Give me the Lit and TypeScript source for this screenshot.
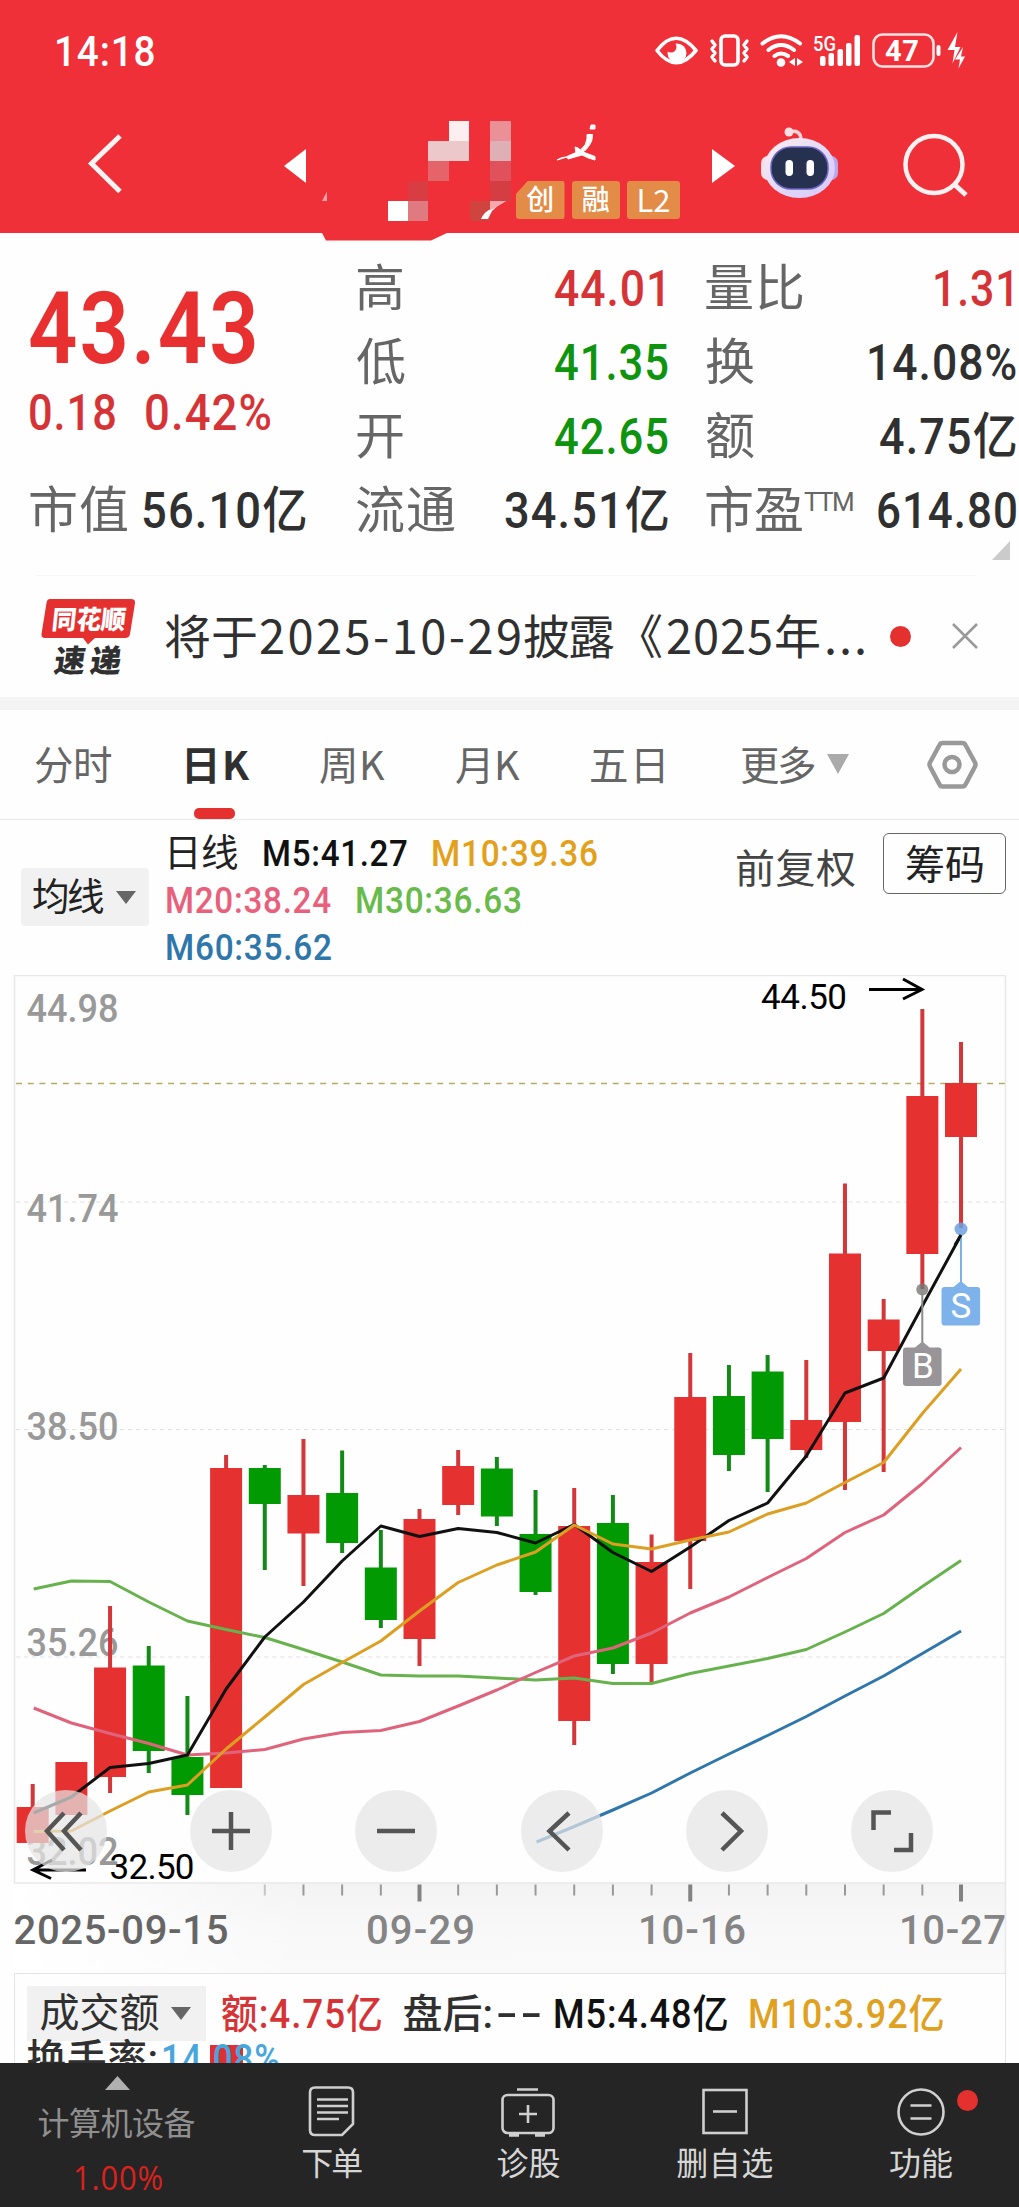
import { LitElement, html, css, svg } from "lit";
import { customElement, property } from "lit/decorators.js";

const NUM = '"Roboto", "Noto Sans CJK SC", sans-serif';
const ruler = document.createElement("canvas").getContext("2d")!;

/** One line of text whose visible glyphs span exactly `w` pixels. */
@customElement("fit-text")
class FitText extends LitElement {
  static styles = css`
    :host { display: block; white-space: nowrap; flex: none; }
    .run { display: block; transform-origin: 0 50%; }
  `;
  @property() text = "";
  @property({ type: Number }) w = 0;

  render() {
    return html`<span class="run">${this.text}</span>`;
  }

  updated() {
    const cs = getComputedStyle(this);
    ruler.font = `${cs.fontWeight} ${cs.fontSize} ${cs.fontFamily}`;
    const m = ruler.measureText(this.text);
    const n = [...this.text].length;
    const ink = m.actualBoundingBoxLeft + m.actualBoundingBoxRight;
    // Digits that would be squeezed together are condensed instead; bare dashes are widened.
    const condensed = /\d/.test(this.text) && this.w < ink;
    const k = /^-+$/.test(this.text) ? 1.6 : condensed ? Math.max(0.84, (this.w / ink) * 0.965) : 1;
    const gap = n > 1 && this.w ? (this.w / k - ink) / (n - 1) : 0;
    const run = this.renderRoot.querySelector(".run") as HTMLElement;
    this.style.letterSpacing = `${gap}px`;
    this.style.marginLeft = `${m.actualBoundingBoxLeft * k}px`;
    const inkRight = (m.actualBoundingBoxRight + (n - 1) * gap) * k;
    this.style.marginRight = `${-(m.width + n * gap - inkRight)}px`;
    run.style.transform = k === 1 ? "none" : `scaleX(${k})`;
  }
}

const t = (text: string, w: number, cls = "") =>
  html`<fit-text class=${cls} .text=${text} .w=${w}></fit-text>`;

@customElement("app-header")
class AppHeader extends LitElement {
  static styles = css`
    :host { display: block; height: 233px; background: #f03038; color: #fff; font-family: ${css([NUM] as any)}; position: relative; }
    svg { display: block; flex: none; overflow: visible; }
    text { font-family: "Roboto", sans-serif; font-weight: 700; fill: #fff; }
    .status { height: 102px; display: flex; align-items: center; justify-content: space-between; padding: 0 54px 0 57px; }
    .time { font-size: 42px; font-weight: 500; line-height: 50px; padding-top: 2px; }
    .nav { height: 131px; display: flex; align-items: flex-start; }
    .back { margin: 31px 0 0 87px; }
    .prev { margin: 47px 0 0 161px; }
    .name { margin: 14px 0 0 14px; }
    .tags { display: flex; gap: 7px; margin: 79px 0 0 -64px; }
    .tag { height: 38px; width: 48.500px; display: flex; align-items: center; justify-content: center; border-radius: 3px; background: #e38c47; font-size: 28px; line-height: 35px; padding-bottom: 3px; box-sizing: border-box; font-weight: 500; font-family: "Noto Sans CJK SC", sans-serif; }
    .tag.cut { clip-path: polygon(24% 0, 100% 0, 100% 100%, 0 100%, 0 34%); }
    .tag.wide { width: 53px; font-size: 31px; font-weight: 400; }
    .next { margin: 47px 0 0 32px; }
    .bot { margin: 24px 0 0 26px; }
    .find { margin: 31px 0 0 63px; }
  `;

  render() {
    return html`
      <div class="status">
        ${t("14:18", 97, "time")}
        <svg width="310" height="36" viewBox="655 33 310 36">
          <g fill="none" stroke="#fff" stroke-width="3.6" stroke-linecap="round" stroke-linejoin="round">
            <path d="M657 50.5Q676 26 696 50.5Q676 75 657 50.5Z" />
            <rect x="721" y="36" width="17" height="29" rx="4" />
            <path d="M712 41l3 4-3 4 3 4-3 4 3 4M747 41l-3 4 3 4-3 4 3 4-3 4" stroke-width="3.4" />
            <path d="M762.500 43.500Q781 29 800 43.500M768.500 50Q781 40 794 50M774.500 56Q781 51 788 56" stroke-width="4" />
          </g>
          <circle cx="677" cy="53" r="9.500" fill="#fff" />
          <circle cx="671" cy="47" r="5.500" fill="#f03038" />
          <circle cx="781" cy="62.500" r="4.300" fill="#fff" />
          <path d="M795 58v8l-6-4zM797 58v8l6-4z" fill="#fff" />
          <text x="813" y="51" font-size="21" textLength="23" lengthAdjust="spacingAndGlyphs" style="font-weight:500">5G</text>
          <g fill="#fff">
            <rect x="820" y="56" width="5.500" height="10" rx="2" />
            <rect x="828.500" y="53" width="5.500" height="13" rx="2" />
            <rect x="837.500" y="49" width="5.500" height="17" rx="2" />
            <rect x="846" y="43" width="5.500" height="23" rx="2" />
            <rect x="854.500" y="35" width="5.500" height="31" rx="2" />
            <rect x="936.500" y="45" width="4" height="11" rx="2" />
            <path d="M957.500 32l-10 18h7l-2 13.500 8-16.500h-5.500zM963 47l-8 12.500h5l-1.500 9 6.500-12h-4z" />
          </g>
          <rect x="873.500" y="34.500" width="60" height="32" rx="9" fill="none" stroke="#fff" stroke-opacity=".85" stroke-width="2.600" />
          <text x="885" y="60.500" font-size="29" textLength="34">47</text>
        </svg>
      </div>
      <div class="nav">
        <svg class="back" width="36" height="62" viewBox="87 133 36 62">
          <path d="M120 136L91.500 163.500 120 191.500" fill="none" stroke="#fff3f3" stroke-width="5" />
        </svg>
        <svg class="prev" width="22" height="34" viewBox="0 0 22 34"><path d="M22 0v34L0 17z" fill="#fff" /></svg>
        <svg class="name" width="260" height="126" viewBox="320 116 260 126">
          <path d="M320 231h130l-3 2-16 7.500H326L322 233z" fill="#f03038" />
          <path d="M322 201l5-9.500v9.500z" fill="#f9a3a6" />
          <path d="M388 201h20v20h-20z" fill="#fff" />
          <path d="M449 121h20v20h-20z" fill="#fdeeef" />
          <path d="M428 141h41v20h-41z" fill="#ecc8ca" />
          <path d="M428 161h21v20h-21z" fill="#e4646a" />
          <path d="M408 181h20v20h-20z" fill="#d83d43" />
          <path d="M408 201h20v20h-20z" fill="#e07a81" />
          <path d="M490 121h21v20h-21z" fill="#ec9098" />
          <path d="M490 141h21v20h-21z" fill="#dfafb6" />
          <path d="M490 161h21v20h-21z" fill="#df525c" />
          <path d="M490 181h21v20h-21z" fill="#d43d41" />
          <path d="M470 201h20v20h-20z" fill="#d0443f" />
          <path d="M481 219q3-7 9-9.500V201h16q-8 4-14 10l-4 8z" fill="#fff" />
          <path d="M490 201h16q-7 3-11 7l-5 2z" fill="#f6a8ac" />
          <path d="M591 125h4v4h-5zM587 134.500h5.500q0 7-3 10.500-3 5-6.500 7l12 4.500v3.500q-8-2-13-5l-14 4-1-2.500 9-4-1-5.500 3 1 2.500 2q6-5 6.500-11zM567 157l-10 3q5-3.500 10-3z" fill="#fff" stroke="#fff" stroke-width="1" />
        </svg>
        <div class="tags">
          <div class="tag cut">创</div>
          <div class="tag">融</div>
          <div class="tag wide">L2</div>
        </div>
        <svg class="next" width="23" height="34" viewBox="0 0 23 34"><path d="M0 0v34L23 17z" fill="#fff" /></svg>
        <svg class="bot" width="78" height="73" viewBox="761 126 78 73">
          <defs>
            <linearGradient id="shell" x1="0" y1="0" x2="1" y2="1">
              <stop offset="0" stop-color="#ffeef0" /><stop offset=".6" stop-color="#dfd6f8" /><stop offset="1" stop-color="#d7c6f6" />
            </linearGradient>
          </defs>
          <path d="M789 132q12-3 12 8" fill="none" stroke="#f7d3dc" stroke-width="3.500" />
          <circle cx="789" cy="132" r="4.500" fill="#fbdfe4" />
          <rect x="761" y="156" width="14" height="24" rx="7" fill="#f6dfe8" />
          <rect x="824" y="156" width="14" height="24" rx="7" fill="#b9a6ee" />
          <ellipse cx="799.500" cy="168" rx="35.500" ry="30" fill="url(#shell)" />
          <rect x="771" y="147" width="57" height="42" rx="20" fill="#26304f" stroke="#6a62c4" stroke-width="1.500" />
          <rect x="785.500" y="160" width="7.500" height="16" rx="3.700" fill="#fff" />
          <rect x="806.500" y="160" width="7.500" height="16" rx="3.700" fill="#fff" />
        </svg>
        <svg class="find" width="66" height="66" viewBox="902 133 66 66">
          <circle cx="934" cy="164.500" r="28.500" fill="none" stroke="#fff1f1" stroke-width="4.500" />
          <path d="M955 185l11 10" stroke="#fff1f1" stroke-width="5" />
        </svg>
      </div>
    `;
  }
}

@customElement("quote-panel")
class QuotePanel extends LitElement {
  static styles = css`
    :host { display: flex; height: 342px; box-sizing: border-box; padding-top: 19px; font-family: ${css([NUM] as any)}; font-size: 50px; font-weight: 500; line-height: 75px; color: #303030; position: relative; }
    .side { width: 327px; padding-left: 30px; }
    .mid { width: 311px; }
    .right { width: 313px; padding-left: 38px; }
    .row { display: flex; justify-content: space-between; height: 74px; }
    .side .row { justify-content: flex-start; gap: 17px; }
    .right .row { padding-right: 3px; }
    .label { color: #666; font-weight: 400; display: flex; }
    .price { margin-top: 8px; height: 134px; line-height: 138px; font-size: 101px; font-weight: 600; color: #e83030; display: flex; }
    .side .change { height: 37px; line-height: 39px; gap: 31px; color: #d63337; margin-bottom: 43px; }
    .up { color: #d63337; }
    .down { color: #0e940e; }
    .tail1 { padding-right: 5px; }
    .ttm { font-size: 26px; font-weight: 400; line-height: 57px; padding-left: 2px; display: flex; }
    .more { position: absolute; left: 992px; top: 308px; display: block; }
  `;

  render() {
    const row = (label: any, value: any) => html`<div class="row"><div class="label">${label}</div>${value}</div>`;
    return html`
      <div class="side">
        <div class="price">${t("43.43", 225)}</div>
        <div class="row change">${t("0.18", 85)}${t("0.42%", 124.5)}</div>
        ${row(t("市值", 97), t("56.10亿", 162))}
      </div>
      <div class="mid">
        ${row(t("高", 47), html`<div class="tail1">${t("44.01", 108, "up")}</div>`)}
        ${row(t("低", 47), t("41.35", 113, "down"))}
        ${row(t("开", 47), t("42.65", 113, "down"))}
        ${row(t("流通", 98), t("34.51亿", 163))}
      </div>
      <div class="right">
        ${row(t("量比", 97), html`<div class="tail1">${t("1.31", 76, "up")}</div>`)}
        ${row(t("换", 47), t("14.08%", 146))}
        ${row(t("额", 47), t("4.75亿", 136))}
        ${row(html`${t("市盈", 96)}<div class="ttm">${t("TTM", 49)}</div>`, t("614.80", 138))}
      </div>
      <svg class="more" width="18" height="19"><path d="M18 0v19H0z" fill="#cbcbcb" /></svg>
    `;
  }
}

@customElement("news-strip")
class NewsStrip extends LitElement {
  static styles = css`
    :host { display: flex; align-items: center; height: 122px; padding: 0 42px 0 41px; box-sizing: border-box; background: linear-gradient(#f6f6f6, #f6f6f6) 35px 0 / 941px 1px no-repeat; font-family: "Noto Sans CJK SC", sans-serif; }
    svg { display: block; flex: none; overflow: visible; }
    .logo { margin-top: 1px; }
    text { font-family: "Noto Sans CJK SC", sans-serif; font-weight: 900; }
    .msg { flex: none; width: 697px; margin: -5px 28px 0 29px; display: flex; align-items: baseline; font-size: 47px; line-height: 60px; color: #303030; }
    .date { margin: 0 4px; display: flex; }
    .yr { margin: 0 5px 0 5px; display: flex; }
    .open { margin-left: 26px; display: flex; }
    .dots { margin-left: 8px; display: flex; }
    .dot { flex: none; width: 21px; height: 21px; border-radius: 50%; background: #e53030; margin-right: 41px; }
  `;

  render() {
    return html`
      <svg class="logo" width="95" height="78" viewBox="41 596 95 78">
        <path d="M50 597h81q4.500 0 4 4l-5 31q-.6 4-5 4H95l-7 6.500-5-6.500H45q-4 0-3.500-4l5-31q.5-4 3.500-4z" fill="#e53030" />
        <text transform="translate(51 627) skewX(-6)" x="0" y="0" font-size="26" textLength="74" lengthAdjust="spacingAndGlyphs" fill="#fff">同花顺</text>
        <text transform="translate(53 669.500) skewX(-8)" x="0" y="0" font-size="31" fill="#303030">速</text>
        <text transform="translate(89 669.500) skewX(-8)" x="0" y="0" font-size="31" fill="#303030">递</text>
      </svg>
      <div class="msg">
        ${t("将于", 91)}
        <div class="date">${t("2025-10-29", 260)}</div>
        ${t("披露", 90)}
        <div class="open">${t("《", 21)}</div>
        <div class="yr">${t("2025", 104)}</div>
        ${t("年", 43)}
        <div class="dots">${t("...", 37)}</div>
      </div>
      <div class="dot"></div>
      <svg width="26" height="26" viewBox="0 0 26 26"><path d="M1 1l24 24M25 1L1 25" stroke="#999" stroke-width="2.500" /></svg>
    `;
  }
}

@customElement("period-tabs")
class PeriodTabs extends LitElement {
  static styles = css`
    :host { display: flex; height: 123px; box-sizing: border-box; border-top: 13px solid #f4f4f4; border-bottom: 1px solid #e8e8e8; padding: 0 41px 0 35px; align-items: stretch; font-family: "Noto Sans CJK SC", sans-serif; font-size: 39.500px; line-height: 105px; color: #666; }
    .tab { display: flex; align-items: flex-start; position: relative; margin-right: 71px; }
    .tab:first-child { margin-right: 76px; }
    .on { font-weight: 700; color: #303030; margin-right: 70px; }
    .on::after { content: ""; position: absolute; left: 7px; bottom: 0; width: 41px; height: 11px; border-radius: 5px; background: #e53030; }
    .five { margin-right: 78px; }
    .more { gap: 12px; margin-right: 0; }
    .more svg { margin-top: 44px; }
    .gear { margin: 30px 0 0 auto; display: block; }
  `;

  render() {
    return html`
      <div class="tab">${t("分时", 76)}</div>
      <div class="tab on">${t("日K", 63)}</div>
      <div class="tab">${t("周K", 65)}</div>
      <div class="tab">${t("月K", 64)}</div>
      <div class="tab five">${t("五日", 72)}</div>
      <div class="tab more">${t("更多", 74)}<svg width="22" height="20"><path d="M0 0h22L11 20z" fill="#aaa" /></svg></div>
      <svg class="gear" width="52" height="50" viewBox="927 740 52 50" fill="none" stroke="#999">
        <path d="M943.500 743h20q2 0 3 2l9.500 17.500q1 2 0 4L966.500 784.500q-1 2-3 2h-20q-2 0-3-2L931 766.500q-1-2 0-4L940.500 745q1-2 3-2z" stroke-width="4.500" stroke-linejoin="round" />
        <circle cx="953" cy="764.500" r="7.500" stroke-width="4.500" />
      </svg>
    `;
  }
}

@customElement("average-legend")
class AverageLegend extends LitElement {
  static styles = css`
    :host { display: flex; height: 155px; box-sizing: border-box; padding: 0 13px 0 21px; font-family: ${css([NUM] as any)}; font-size: 37.500px; font-weight: 500; color: #111; }
    .chip { width: 128px; height: 58px; margin-top: 48px; background: #f1f1f1; border-radius: 4px; display: flex; align-items: center; box-sizing: border-box; padding: 0 13px 0 12px; justify-content: space-between; line-height: 62px; font-weight: 400; color: #222; }
    .lines { margin: 10px 0 0 18px; width: 539px; line-height: 47px; }
    .line { display: flex; gap: 26px; height: 47px; }
    .line.first { padding-left: 3px; }
    .cjk { font-weight: 400; color: #222; }
    .m10 { color: #e3a01b; }
    .m20 { color: #e8607c; }
    .m30 { color: #68bb4a; }
    .m60 { color: #2f77ab; }
    .adj { margin: 20px 0 0 31px; line-height: 60px; font-size: 40px; font-weight: 400; color: #444; display: flex; }
    .btn { margin: 13px 0 0 auto; width: 123px; height: 61px; box-sizing: border-box; border: 1px solid #666; border-radius: 6px; display: flex; justify-content: center; line-height: 64px; font-size: 40px; font-weight: 400; color: #222; }
  `;

  render() {
    return html`
      <div class="chip">${t("均线", 71)}<svg width="20" height="13"><path d="M0 0h20L10 13z" fill="#666" /></svg></div>
      <div class="lines">
        <div class="line first">${t("日线", 68, "cjk")}${t("M5:41.27", 143)}${t("M10:39.36", 164, "m10")}</div>
        <div class="line">${t("M20:38.24", 164, "m20")}${t("M30:36.63", 164, "m30")}</div>
        <div class="line">${t("M60:35.62", 164, "m60")}</div>
      </div>
      <div class="adj">${t("前复权", 118)}</div>
      <div class="btn">${t("筹码", 77)}</div>
    `;
  }
}

/* dir, high, body top, body bottom, low */
type Candle = [string, number, number, number, number];
const candles: Candle[] = [
  ["r", 1784, 1807, 1843, 1843], ["r", 1762, 1762, 1815, 1815], ["r", 1606, 1667.5, 1777, 1793],
  ["g", 1646, 1665.5, 1751, 1773], ["g", 1696, 1757, 1795, 1815], ["r", 1455, 1468, 1788, 1788],
  ["g", 1465, 1468, 1504, 1570], ["r", 1439, 1495, 1533.5, 1586], ["g", 1450.5, 1493, 1543, 1553],
  ["g", 1530, 1567.5, 1620, 1628], ["r", 1509, 1519, 1639, 1666], ["r", 1450, 1466, 1505, 1515],
  ["g", 1457, 1468.5, 1516.5, 1526], ["g", 1490, 1534, 1592, 1595], ["r", 1488, 1526, 1721, 1745],
  ["g", 1495, 1523, 1664, 1674], ["r", 1534.5, 1562, 1664, 1682], ["r", 1353, 1397, 1541, 1589],
  ["g", 1365, 1396, 1455, 1471], ["g", 1355, 1371.5, 1439, 1492], ["r", 1360, 1420, 1450, 1458],
  ["r", 1183.5, 1253.5, 1422, 1490], ["r", 1299, 1319.5, 1351, 1472], ["r", 1009, 1096, 1254, 1289],
  ["r", 1042, 1083, 1137, 1228],
];
const averages: { color: string; start: number; y: number[] }[] = [
  { color: "#2f77ab", start: 13, y: [1842, 1826.5, 1810, 1793, 1773, 1754, 1735.5, 1716.5, 1696, 1676, 1653.5, 1631] },
  { color: "#68b24e", start: 0, y: [1589, 1581, 1581.5, 1602, 1621, 1629.5, 1637.5, 1649.5, 1662, 1675, 1676, 1676, 1678, 1680, 1678, 1683.5, 1683.5, 1673.5, 1666, 1658.5, 1649.5, 1632, 1613.5, 1586.5, 1560.5] },
  { color: "#e0637c", start: 0, y: [1708, 1723, 1733.5, 1743.5, 1755, 1753, 1749.5, 1739, 1732.5, 1730.5, 1721.5, 1706, 1690, 1672.5, 1656, 1648, 1633, 1613, 1597, 1577.5, 1558.5, 1532.5, 1515, 1483.5, 1447.5] },
  { color: "#111", start: 0, y: [1813, 1797, 1767.5, 1763.5, 1755, 1689, 1637, 1602, 1561, 1526, 1536.5, 1528.5, 1532.5, 1543, 1524.5, 1552.5, 1571.5, 1547, 1520.5, 1503, 1456, 1393, 1378, 1306, 1235] },
  { color: "#dd9f22", start: 0, y: [1831.5, 1831, 1811, 1792, 1785, 1749, 1717, 1684.5, 1662.5, 1641, 1611, 1582.5, 1565, 1552, 1525, 1544, 1549, 1540, 1532, 1514, 1503, 1482.5, 1462.5, 1413.5, 1369] },
];
const cx = (i: number) => 32.7 + 38.68 * i;

@customElement("kline-chart")
class KlineChart extends LitElement {
  static styles = css`
    :host { display: block; position: relative; height: 998px; }
    svg { display: block; }
    text { font-family: "Roboto", sans-serif; }
    .scale { font-size: 38.5px; font-weight: 500; fill: #999; }
    .mark { font-size: 35px; fill: #000; }
    .date { font-size: 40px; fill: #858585; font-weight: 500; }
    .first { fill: #666; }
    .badge { font-size: 35px; fill: #fff; text-anchor: middle; }
    .tools { position: absolute; left: 25px; top: 815px; display: flex; gap: 83.2px; }
    .tool { width: 82px; height: 82px; border-radius: 50%; background: rgba(229, 229, 229, 0.72); }
  `;

  render() {
    const icons = [
      "M39 23L22 41l17 19M56 23L39 41l17 19",
      "M41 22v38M22 41h38",
      "M22 41h38",
      "M48 23L28.500 41 48 60",
      "M36 23l19 18-19 19",
      "M22.500 40V22.500H40M60 43v17H43",
    ];
    return html`
      <svg width="1019" height="998" viewBox="0 975 1019 998">
        <defs>
          <linearGradient id="fade" x1="0" y1="0" x2="0" y2="1">
            <stop offset="0" stop-color="#f4f3f4" /><stop offset=".5" stop-color="#f9f8f9" /><stop offset="1" stop-color="#fbfafb" />
          </linearGradient>
          <linearGradient id="side" x1="0" y1="0" x2="1" y2="0">
            <stop offset="0" stop-color="#fff" /><stop offset=".3" stop-color="#fff" stop-opacity="0" />
          </linearGradient>
        </defs>
        <rect x="14" y="1883" width="991" height="90" fill="url(#fade)" />
        <rect x="14" y="1883" width="991" height="90" fill="url(#side)" />
        <path d="M14.500 1883V975.500H1005.500V1973M14 1883H1005" fill="none" stroke="#e9e9e9" stroke-width="1.600" />
        <path d="M16 1202H1005M16 1429.500H1005M16 1657H1005" stroke="#e2e2e2" stroke-dasharray="4.500 3.500" />
        <path d="M16 1083.500H1005" stroke="#b9aa62" stroke-width="1.600" stroke-dasharray="6 5.700" />
        ${[[1022, "44.98"], [1222, "41.74"], [1440, "38.50"], [1656, "35.26"], [1864.5, "32.02"]].map(
          ([y, s]) => svg`<text class="scale" x="26.500" y=${y} textLength="92" lengthAdjust="spacingAndGlyphs">${s}</text>`
        )}
        ${candles.map(([d, hi, top, bot, lo], i) => svg`
          <path d="M${cx(i)} ${hi}V${lo}" stroke=${d === "r" ? "#d2373a" : "#138a18"} stroke-width="4" />
          <rect x=${cx(i) - 16} y=${top} width="32" height=${bot - top} fill=${d === "r" ? "#e63131" : "#029a02"} />`)}
        ${averages.map((a) => svg`<polyline fill="none" stroke=${a.color} stroke-width="3" stroke-linejoin="round"
          points=${a.y.map((y, k) => `${cx(a.start + k) + (k ? 0 : 1)},${y}`).join(" ")} />`)}
        <g>
          <circle cx="922.300" cy="1289.500" r="6" fill="#777" fill-opacity=".8" />
          <path d="M922.300 1293V1345" stroke="#8a8a8a" stroke-width="2" />
          <path d="M906 1347.500h9l7.300-6 7.300 6h9q3 0 3 3v32.500q0 3-3 3H906q-3 0-3-3v-32.500q0-3 3-3z" fill="#979598" />
          <text class="badge" x="923" y="1378">B</text>
          <circle cx="961" cy="1229" r="6.500" fill="#6d9fe0" fill-opacity=".85" />
          <path d="M961 1235V1284" stroke="#7fb0e4" stroke-width="2" />
          <path d="M944.500 1287h9l7.300-6 7.300 6h9q3 0 3 3v32.500q0 3-3 3H944.500q-3 0-3-3V1290q0-3 3-3z" fill="#7eb2ea" />
          <text class="badge" x="961" y="1317.500">S</text>
          <path d="M955 1245L961 1235" stroke="#111" stroke-width="3" />
        </g>
        <text class="mark" x="761" y="1009" textLength="86">44.50</text>
        <path d="M869 989.500H921M903 979l19 10.500-19 9.500" fill="none" stroke="#000" stroke-width="3" />
        <text class="mark" x="109.500" y="1879" textLength="85">32.50</text>
        <path d="M86 1870H34M52 1860L33 1870l18 8.500" fill="none" stroke="#000" stroke-width="3" />
        ${candles.map((_, i) => {
          if (i < 6) return "";
          const major = i === 10 || i === 17 || i === 24;
          return svg`<path d="M${cx(i)} 1884.500v${major ? 17 : 11}" stroke=${major ? "#828282" : i === 6 ? "#c4c4c4" : "#999"} stroke-width=${major ? 4 : 2} />`;
        })}
        <text class="date first" x="13.500" y="1944" textLength="215">2025-09-15</text>
        <text class="date" x="366" y="1944" textLength="109">09-29</text>
        <text class="date" x="638" y="1944" textLength="108">10-16</text>
        <text class="date" x="899" y="1944" textLength="107">10-27</text>
      </svg>
      <div class="tools">
        ${icons.map((d) => html`<div class="tool"><svg width="82" height="82" fill="none" stroke="#555" stroke-width="4.500">${svg`<path d=${d} />`}</svg></div>`)}
      </div>
    `;
  }
}

@customElement("turnover-panel")
class TurnoverPanel extends LitElement {
  static styles = css`
    :host { display: block; height: 90px; overflow: hidden; box-sizing: border-box; margin: 0 13px 0 13.500px; border: 1.500px solid #e6e3e4; border-bottom: 0; font-family: ${css([NUM] as any)}; font-size: 40px; font-weight: 500; color: #303030; }
    .row { display: flex; height: 55px; line-height: 57px; margin: 12px 0 0 12px; }
    .chip { width: 179px; height: 55px; background: #f1f1f1; display: flex; align-items: center; box-sizing: border-box; padding: 0 15px 0 14px; justify-content: space-between; margin-right: 16px; font-weight: 400; }
    .g1 { margin-right: 23px; color: #d63337; display: flex; }
    .g2 { margin-right: 15px; display: flex; gap: 6px; }
    .g3 { margin-right: 23px; color: #111; display: flex; }
    .m10 { color: #e0a020; }
    .row2 { display: flex; line-height: 46px; margin: -4px 0 0 13px; gap: 7px; }
    .rate { color: #48a6dc; position: relative; display: flex; background: linear-gradient(#dc3035, #dc3035) 46px 8px / 33px 40px no-repeat; }
  `;

  render() {
    return html`
      <div class="row">
        <div class="chip">${t("成交额", 118)}<svg width="20" height="13"><path d="M0 0h20L10 13z" fill="#666" /></svg></div>
        <div class="g1">${t("额:4.75亿", 159)}</div>
        <div class="g2">${t("盘后:", 88)}${t("--", 42)}</div>
        <div class="g3">${t("M5:4.48亿", 172)}</div>
        ${t("M10:3.92亿", 193, "m10")}
      </div>
      <div class="row2">${t("换手率:", 129)}<div class="rate">${t("14.08%", 115)}</div></div>
    `;
  }
}

@customElement("bottom-nav")
class BottomNav extends LitElement {
  static styles = css`
    :host { display: flex; height: 144px; background: #252525; color: #d6d6d6; font-family: "Noto Sans CJK SC", sans-serif; font-size: 32px; }
    svg { display: block; overflow: visible; }
    .board { width: 234px; display: flex; flex-direction: column; align-items: center; color: #8f8f8f; }
    .board svg { margin-top: 13px; }
    .sector { line-height: 40px; margin-top: 11px; display: flex; }
    .pct { font-family: "Open Sans", sans-serif; font-size: 33px; line-height: 40px; margin-top: 17px; padding-left: 2px; color: #d9221e; display: flex; }
    .item { flex: 1; display: flex; flex-direction: column; align-items: center; position: relative; }
    .item svg { margin-top: 23px; }
    .cap { display: flex; line-height: 40px; margin-top: 3px; }
    .dot { position: absolute; left: 134.500px; top: 27px; width: 21px; height: 21px; border-radius: 50%; background: #e53030; }
  `;

  render() {
    const item = (icon: any, name: string, w: number, dot = false) => html`
      <div class="item">
        <svg width="54" height="52" viewBox="0 0 54 52" fill="none" stroke="#cfcfcf" stroke-width="2.600">${icon}</svg>
        <div class="cap">${t(name, w)}</div>
        ${dot ? html`<div class="dot"></div>` : ""}
      </div>`;
    return html`
      <div class="board">
        <svg width="25" height="14"><path d="M12.500 0L25 14H0z" fill="#b0b0b0" /></svg>
        <div class="sector">${t("计算机设备", 157)}</div>
        <div class="pct">${t("1.00%", 87)}</div>
      </div>
      ${item(svg`<path d="M10 1.500h33q5 0 5 5V38l-11 11H10q-5 0-5-5V6.500q0-5 5-5z"/><path d="M12 13.500h31M12 20h31M12 26.500h31M12 33h22" />`, "下单", 60)}
      ${item(svg`<rect x="1.500" y="9" width="51" height="38" rx="5"/><path d="M16 3.500h21M27 19v18M18 28h18"/><path d="M8 49h10M34 49h10" stroke-width="3.500"/>`, "诊股", 62)}
      ${item(svg`<rect x="5.500" y="4" width="43" height="43"/><path d="M15 25.500h24"/>`, "删自选", 95)}
      ${item(svg`<circle cx="27" cy="26" r="22.500"/><path d="M16.500 19.500h21M16.500 32.500h21"/>`, "功能", 62, true)}
    `;
  }
}

@customElement("app-root")
class AppRoot extends LitElement {
  static styles = css`
    :host { display: flex; flex-direction: column; width: 1019px; height: 2207px; overflow: hidden; background: #fefefe; }
  `;

  render() {
    return html`
      <app-header></app-header>
      <quote-panel></quote-panel>
      <news-strip></news-strip>
      <period-tabs></period-tabs>
      <average-legend></average-legend>
      <kline-chart></kline-chart>
      <turnover-panel></turnover-panel>
      <bottom-nav></bottom-nav>
    `;
  }
}
